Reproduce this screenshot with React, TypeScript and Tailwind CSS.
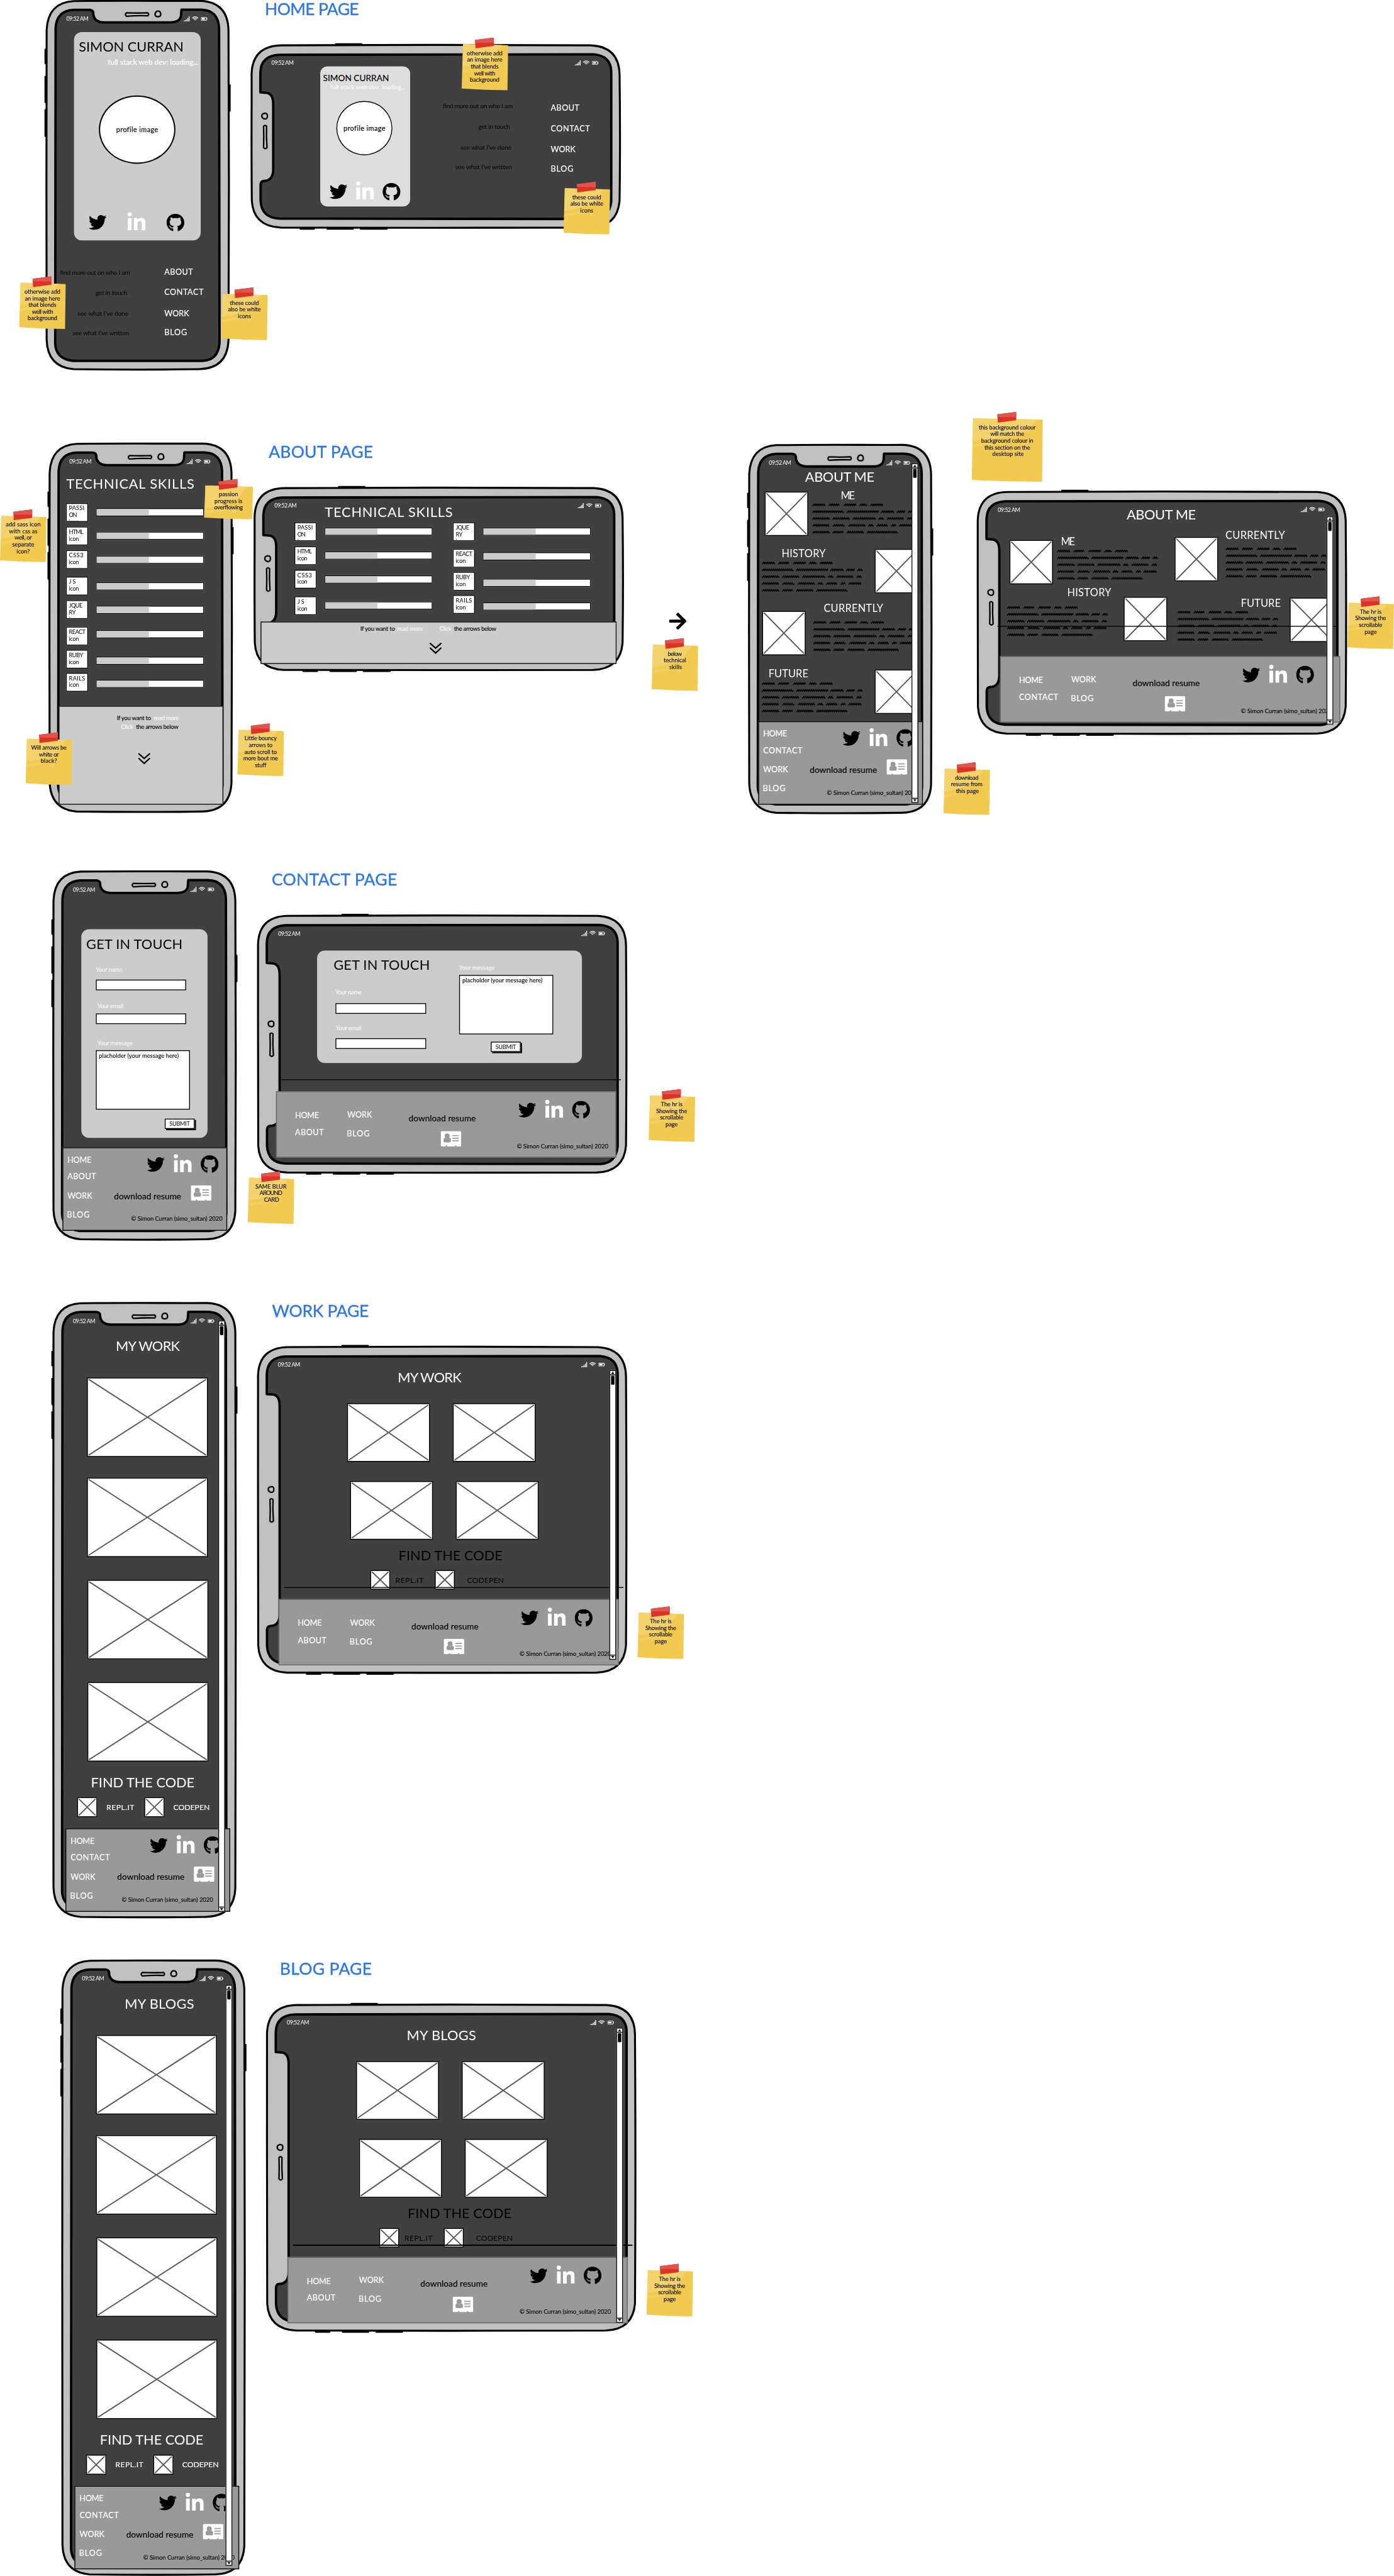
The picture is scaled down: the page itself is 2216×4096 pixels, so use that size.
import { useLayoutEffect, useRef, type ReactNode } from "react";
import { FaArrowRight, FaGithub, FaLinkedinIn, FaTwitter } from "react-icons/fa";

/* One line of lettering, tracked so that it spans exactly `w` canvas units. */
function T({ w, className = "", children }: { w: number; className?: string; children: string }) {
  const ref = useRef<HTMLSpanElement>(null);
  useLayoutEffect(() => {
    const el = ref.current;
    if (!el) return;
    el.style.letterSpacing = "0px";
    const natural = parseFloat(getComputedStyle(el).width);
    const spacing = (w - natural) / Math.max(1, children.length - 1);
    el.style.letterSpacing = `${spacing}px`;
    el.style.marginRight = `${-spacing}px`;
  }, [w, children]);
  return (
    <span ref={ref} className={`inline-block w-fit shrink-0 whitespace-pre ${className}`}>
      {children}
    </span>
  );
}

function Title({ w, className, children }: { w: number; className: string; children: string }) {
  return (
    <h2 className={`absolute flex text-[39px] leading-[40px] text-[#2b78e4] [-webkit-text-stroke:0.5px_#2b78e4] ${className}`}>
      <T w={w}>{children}</T>
    </h2>
  );
}

/* Sketched phone outline; `w` and `h` are the upright dimensions. */
function Phone({ w, h }: { w: number; h: number }) {
  const c = w / 2;
  return (
    <g stroke="#000" strokeLinejoin="round">
      <rect x={-2} y={114} width={6} height={36} rx={2} stroke="none" />
      <rect x={-2} y={177} width={6} height={64} rx={2} stroke="none" />
      <rect x={-2} y={255} width={6} height={65} rx={2} stroke="none" />
      <rect x={w - 5} y={197} width={7} height={64} rx={2} stroke="none" />
      <path
        d={`M66 2.5 C${c} 1 ${c + 60} 2.5 ${w - 70} 2 Q${w - 4} 4 ${w - 3} 72 L${w - 2} ${h / 2} L${w - 3} ${h - 70} Q${w - 6} ${h - 4} ${w - 72} ${h - 3} Q${c} ${h - 1} 66 ${h - 3} Q5 ${h - 8} 3 ${h - 72} L2.5 ${h / 2} L3 70 Q6 6 66 2.5Z`}
        fill="#c0c0c0"
        strokeWidth={4.6}
      />
      <path
        d={`M66 23 H104 Q113 24 112 33 Q114 52 138 52.500 H${w - 139} Q${w - 115} 52 ${w - 114} 36 L${w - 113} 22.500 H${w - 66} Q${w - 27} 24 ${w - 25} 66 L${w - 24} ${h - 64} Q${w - 27} ${h - 24} ${w - 64} ${h - 22.5} H64 Q25 ${h - 27} 23 ${h - 62} L24 66 Q26 25 66 23Z`}
        fill="#404040"
        strokeWidth={5.6}
      />
      <path
        d={`M${c - 26} 30 Q${c} 31 ${c + 24} 30 Q${c + 28} 33 ${c + 24} 37 Q${c} 36 ${c - 26} 38 Q${c - 31} 34 ${c - 26} 30Z`}
        fill="#c0c0c0"
        strokeWidth={3.4}
      />
      <path d={`M${c + 47} 26 q6 -1 7 6 q1 7 -6 7 q-8 0 -7 -7 q2 -6 6 -6Z`} fill="#c0c0c0" strokeWidth={3.4} />
    </g>
  );
}

function StatusBar() {
  return (
    <div className="mt-[34px] mr-[52px] ml-[49px] flex h-[20px] shrink-0 items-center justify-between text-white">
      <T w={52} className="text-[13px] leading-[20px]">09:52 AM</T>
      <svg className="h-[14px] w-[56px]" viewBox="0 0 56 14" fill="#fff">
        <path d="M0 11h2v2h-2zM3 10h2v3h-2zM6 8h2v5h-2zM9 5h2v8h-2zM12 1h2v12h-2z" />
        <g fill="none" stroke="#fff" strokeWidth="1.7">
          <path d="M20 5.500Q27 -1 34 5.500" />
          <path d="M22.500 7.500Q27 3.500 31.500 7.500" />
          <path d="M25 9.500Q27 8 29 9.500" />
        </g>
        <path d="M41 3h13v2h1.500v4h-1.500v2h-13zM42.200 4.200v5.600h10.600v-5.600z" fillRule="evenodd" />
        <path d="M43 5h7v4h-7z" />
      </svg>
    </div>
  );
}

function Device({
  w,
  h,
  landscape = false,
  className,
  children,
}: {
  w: number;
  h: number;
  landscape?: boolean;
  className: string;
  children: ReactNode;
}) {
  return (
    <div className={`absolute ${className}`}>
      <svg className="absolute inset-0 h-full w-full overflow-visible" viewBox={`0 0 ${w} ${h}`}>
        {landscape ? (
          <g transform={`translate(0 ${h}) rotate(-90)`}>
            <Phone w={h} h={w} />
          </g>
        ) : (
          <Phone w={w} h={h} />
        )}
      </svg>
      <div className="relative flex h-full flex-col items-stretch">
        <StatusBar />
        {children}
      </div>
    </div>
  );
}

type NoteLine = [text: string, width: number];

function Note({ w = 108.5, h = 123, lines, className }: { w?: number; h?: number; lines: NoteLine[]; className: string }) {
  const t = w / 2 - 23;
  return (
    <div className={`absolute ${className}`}>
      <svg className="absolute inset-0 h-full w-full overflow-visible" viewBox={`0 0 ${w} ${h}`}>
        <path d={`M3 15 L${w} 18 L${w - 1.5} ${h} L${w / 2} ${h - 1} L0 ${h - 4}Z`} fill="#f2ca4f" />
        <path d={`M3 15 L${w - 14} 17.500 Q${w - 28} 34 ${w - 32} 44 Q${w / 2} 62 2 68Z`} fill="#f4d36c" />
        <path d={`M2 76 Q${w / 2} 66 ${w - 34} 68 L${w - 44} 82 L${w - 50} 72 Q${w / 3} 74 1 82Z`} fill="#f4d36c" opacity={0.7} />
        <path d={`M${t} 5.500 L${t + 44} 0 L${t + 44} 19.500 L${t + 1} 25Z`} fill="#de3128" />
        <path d={`M${t} 5.500 L${t + 44} 0 L${t + 44} 12 L${t} 12Z`} fill="#e0554b" />
      </svg>
      <p className="relative flex flex-col items-center pt-[28.500px] text-[13.500px] leading-[15.700px] [-webkit-text-stroke:0.15px_#000]">
        {lines.map(([text, width]) => (
          <T key={text} w={width}>{text}</T>
        ))}
      </p>
    </div>
  );
}

function Picture({ w, h, className = "" }: { w: number; h: number; className?: string }) {
  return (
    <svg className={`shrink-0 ${className}`} width={w} height={h} viewBox={`0 0 ${w} ${h}`}>
      <rect x={1.2} y={1.2} width={w - 2.4} height={h - 2.4} fill="#fff" stroke="#000" strokeWidth={2.2} />
      <path d={`M5 5 L${w - 5} ${h - 5} M${w - 5} 5 L5 ${h - 5}`} stroke="#595959" strokeWidth={2.8} strokeLinecap="round" />
    </svg>
  );
}

const SCRIBBLE_WORDS = [
  [[0, 32], [38, 65], [73, 104], [110, 130], [135, 167]],
  [[0, 76], [80, 156], [160, 193], [197, 218], [223, 237]],
  [[0, 43], [47, 89], [94, 150], [154, 169], [174, 215], [221, 235]],
  [[0, 41], [48, 78], [84, 126], [130, 145], [150, 178], [184, 197], [202, 234]],
  [[0, 43], [47, 74], [80, 122], [127, 202]],
];

function scribble(from: number, to: number, y: number) {
  let d = `M${from + 1.5} ${y + 2}`;
  let up = true;
  for (let x = from + 5; x < to - 2; x += up ? 3 : 1.6) {
    d += ` L${x} ${up ? y - 2 : y + 2}`;
    up = !up;
  }
  return `${d} L${to - 2} ${y + 1}`;
}

function Scribble({ className = "" }: { className?: string }) {
  return (
    <svg className={`h-[76px] w-[238px] shrink-0 ${className}`} viewBox="0 0 238 76">
      {SCRIBBLE_WORDS.map((words, row) => (
        <path
          key={row}
          d={words.map(([a, b]) => scribble(a, b, 6 + row * 16)).join(" ")}
          fill="none"
          stroke="#000"
          strokeWidth={2.3}
          strokeLinecap="round"
          strokeLinejoin="round"
        />
      ))}
    </svg>
  );
}

function ScrollBar({ className }: { className: string }) {
  return (
    <div className={`absolute flex w-[16px] flex-col items-center justify-between border-2 border-black bg-white ${className}`}>
      <div className="flex w-full flex-col items-center">
        <svg className="h-[10px] w-full border-b-2 border-black" viewBox="0 0 12 8">
          <path d="M6 1.500L10 7H2Z" />
        </svg>
        <div className="mt-[1px] h-[21px] w-[8px] rounded-[2px] bg-black" />
      </div>
      <svg className="h-[10px] w-full border-t-2 border-black" viewBox="0 0 12 8">
        <path d="M6 6.500L10 1H2Z" />
      </svg>
    </div>
  );
}

function Socials({ className = "" }: { className?: string }) {
  return (
    <div className={`flex h-[48px] shrink-0 items-center text-black ${className}`}>
      <FaTwitter className="h-[42px] w-[42px] shrink-0" />
      <FaLinkedinIn className="h-[48px] w-[42px] shrink-0 text-white" />
      <FaGithub className="h-[43px] w-[42px] shrink-0" />
    </div>
  );
}

function CardIcon({ className = "" }: { className?: string }) {
  return (
    <svg className={`h-[36px] w-[48px] shrink-0 ${className}`} viewBox="0 0 48 36">
      <path d="M3 0H45Q48 0 48 3V33Q48 36 45 36H36.500V33.500H33.500V36H15V33.500H12V36H3Q0 36 0 33V3Q0 0 3 0Z" fill="#fff" />
      <g fill="#999">
        <circle cx="15" cy="11.500" r="5.800" />
        <path d="M6.500 22Q6.500 16 10.500 15.500Q15 19.500 19.500 15.500Q24 16 24 22Q24 26.500 20.500 26.500H10Q6.500 26.500 6.500 22Z" />
        <path d="M27 9.500H42V12H27zM27 15.500H42V18H27zM27 21.500H42V24H27z" />
      </g>
    </svg>
  );
}

const LINK_WIDTH: Record<string, number> = { HOME: 56, ABOUT: 67, CONTACT: 91.5, WORK: 58, BLOG: 53 };

function Link({ className = "", children }: { className?: string; children: string }) {
  return (
    <a className={`flex text-[18.500px] leading-[20px] text-white [-webkit-text-stroke:0.25px_#fff] ${className}`}>
      <T w={LINK_WIDTH[children]}>{children}</T>
    </a>
  );
}

function Copyright({ className = "" }: { className?: string }) {
  return (
    <T w={213.5} className={`text-[14px] leading-[16px] text-black [-webkit-text-stroke:0.15px_#000] ${className}`}>
      © Simon Curran (simo_sultan) 2020
    </T>
  );
}

function Download({ className = "" }: { className?: string }) {
  return (
    <T w={157} className={`text-[20px] leading-[20px] text-black [-webkit-text-stroke:0.25px_#000] ${className}`}>
      download resume
    </T>
  );
}

function FooterUpright({ second, className, copy = "ml-[40px]" }: { second: string; className: string; copy?: string }) {
  return (
    <footer className={`flex h-[195px] w-[385px] shrink-0 border-2 border-black bg-[#999999] ${className}`}>
      <nav className="ml-[10px] flex w-[109px] shrink-0 flex-col pt-[17px]">
        <Link className="h-[39px]">HOME</Link>
        <Link className="h-[45px]">{second}</Link>
        <Link className="h-[44px]">WORK</Link>
        <Link className="-ml-[1px]">BLOG</Link>
      </nav>
      <div className="flex flex-col">
        <Socials className="mt-[13.500px] ml-[76px] gap-[21px]" />
        <div className="mt-[25.500px] flex h-[36px] items-start">
          <Download className="mt-[14px]" />
          <CardIcon className="ml-[22px]" />
        </div>
        <Copyright className={`mt-[34px] ${copy}`} />
      </div>
    </footer>
  );
}

function FooterWide({ second, className, copy = "" }: { second: string; className: string; copy?: string }) {
  return (
    <footer className={`flex h-[155px] w-[795px] shrink-0 border-2 border-[#666666] bg-[#999999] ${className}`}>
      <nav className="ml-[43px] flex w-[265.500px] shrink-0 items-start">
        <div className="flex w-[122px] flex-col pt-[44px]">
          <Link className="h-[39.500px]">HOME</Link>
          <Link>{second}</Link>
        </div>
        <div className="flex flex-col pt-[42.500px]">
          <Link className="h-[44px]">WORK</Link>
          <Link className="-ml-[1px]">BLOG</Link>
        </div>
      </nav>
      <div className="flex w-[253px] shrink-0 flex-col pt-[50.500px]">
        <Download />
        <CardIcon className="mt-[20.500px] ml-[75px]" />
      </div>
      <div className="flex flex-col pt-[18px]">
        <Socials className="ml-[2.500px] gap-[21px]" />
        <Copyright className={`mt-[52px] ${copy}`} />
      </div>
    </footer>
  );
}

function Rule({ className }: { className: string }) {
  return <div className={`absolute h-[2.500px] bg-black ${className}`} />;
}

/* ---------- Home ---------- */

function HomeRow({ text, w, link, row, label, lift = "" }: { text: string; w: number; link: string; row: string; label: string; lift?: string }) {
  return (
    <div className={`flex ${row}`}>
      <div className={`flex shrink-0 ${label}`}>
        <T w={w} className={`text-[15px] leading-[20px] text-black ${lift}`}>{text}</T>
      </div>
      <Link>{link}</Link>
    </div>
  );
}

function HomeUpright() {
  return (
    <Device w={431} h={866} className="top-0 left-[106px] h-[866px] w-[431px]">
      <div className="mt-[21px] ml-[67px] flex h-[487px] w-[296px] shrink-0 flex-col rounded-[18px] bg-[#cccccc]">
        <T w={245} className="mt-[17px] ml-[11px] text-[32px] leading-[32px] text-black">SIMON CURRAN</T>
        <T w={213} className="mt-[12px] ml-[79px] text-[17px] leading-[20px] text-white [-webkit-text-stroke:0.3px_#fff]">full stack web dev: loading...</T>
        <div className="mt-[67px] ml-[58px] flex h-[160px] w-[179px] shrink-0 items-center justify-center rounded-[50%] border-[3.500px] border-black bg-white">
          <T w={97.5} className="text-[16px] leading-[20px] text-black [-webkit-text-stroke:0.25px_#000]">profile image</T>
        </div>
        <Socials className="mt-[113px] ml-[34px] gap-[49px]" />
      </div>
      <nav className="mt-[64px] flex flex-col">
        <HomeRow text="find more out on who I am" w={163} link="ABOUT" row="h-[47px]" label="w-[278px] pl-[34.500px]" />
        <HomeRow text="get in touch" w={74} link="CONTACT" row="h-[49px]" label="w-[278px] pl-[117.500px]" />
        <HomeRow text="see what I've done" w={119} link="WORK" row="h-[45px]" label="w-[278px] pl-[75px]" />
        <HomeRow text="see what I've written" w={132} link="BLOG" row="h-[20px]" label="w-[278px] pl-[63px]" />
      </nav>
    </Device>
  );
}

function HomeWide() {
  return (
    <Device landscape w={865} h={432} className="top-[103px] left-[585.500px] h-[432px] w-[865px]">
      <div className="-mt-[3px] flex">
        <div className="ml-[161.500px] flex h-[330px] w-[213px] shrink-0 flex-col rounded-[18px] border-[1.500px] border-black bg-[#dddddd]">
          <T w={154} className="mt-[17px] ml-[7px] text-[20px] leading-[20px] text-black [-webkit-text-stroke:0.2px_#000]">SIMON CURRAN</T>
          <T w={176} className="mt-[4px] ml-[24px] text-[14px] leading-[16px] text-white">full stack web dev: loading...</T>
          <div className="mt-[24px] ml-[38px] flex h-[127px] w-[131px] shrink-0 items-center justify-center rounded-[50%] border-[2.500px] border-black bg-white">
            <T w={97.5} className="text-[16px] leading-[20px] text-black [-webkit-text-stroke:0.25px_#000]">profile image</T>
          </div>
          <Socials className="mt-[61px] ml-[21.500px] gap-[20px]" />
        </div>
        <nav className="mt-[88px] ml-[75px] flex flex-col">
          <HomeRow text="find more out on who I am" w={163} link="ABOUT" row="h-[48px]" label="w-[252px] pl-0" lift="-mt-[5px]" />
          <HomeRow text="get in touch" w={74} link="CONTACT" row="h-[49px]" label="w-[252px] pl-[83px]" lift="-mt-[5px]" />
          <HomeRow text="see what I've done" w={119} link="WORK" row="h-[45px]" label="w-[252px] pl-[41px]" lift="-mt-[5px]" />
          <HomeRow text="see what I've written" w={132} link="BLOG" row="h-[20px]" label="w-[252px] pl-[29px]" lift="-mt-[5px]" />
        </nav>
      </div>
    </Device>
  );
}

/* ---------- About: technical skills ---------- */

const SKILL_WIDTH: Record<string, number> = {
  PASSI: 36, ON: 19, HTML: 34, CSS3: 34, JS: 16, JQUE: 32, RY: 16, REACT: 39, RUBY: 33.5, RAILS: 38, icon: 23.5,
};

function Skill({ lines, row = "", bar }: { lines: string[]; row?: string; bar: string }) {
  return (
    <div className={`flex h-[44px] shrink-0 items-start ${row}`}>
      <div className="flex h-[44px] w-[52px] shrink-0 flex-col overflow-hidden border-2 border-black bg-white pt-[2px] pl-[5px] text-[13.500px] leading-[16px] text-black">
        {lines.map((line) => (
          <T key={line} w={SKILL_WIDTH[line]}>{line}</T>
        ))}
      </div>
      <div className={`ml-[17.500px] flex h-[19px] w-[253px] shrink-0 border-[2.500px] border-black bg-white ${bar}`}>
        <div className="h-full w-[49%] bg-[#cccccc]" />
      </div>
    </div>
  );
}

function Chevrons({ className }: { className: string }) {
  return (
    <svg className={`h-[27px] w-[28px] shrink-0 ${className}`} viewBox="0 0 28 27" fill="none" stroke="#000" strokeWidth="3.400">
      <path d="M1.500 2L14 13L26.500 2M1.500 13L14 24.500L26.500 13" strokeLinecap="round" />
    </svg>
  );
}

const HINT = "text-[14px] leading-[20px]";
const HINT_BLACK = "text-[14px] leading-[20px] text-black [-webkit-text-stroke:0.15px_#000]";

function SkillsUpright() {
  return (
    <Device w={431} h={865} className="top-[1035px] left-[113px] h-[865px] w-[431px]">
      <T w={299} className="mt-[24.500px] ml-[42px] text-[32px] leading-[32px] text-white">TECHNICAL SKILLS</T>
      <div className="mt-[30px] ml-[41px] flex shrink-0 flex-col">
        <Skill lines={["PASSI", "ON", "icon"]} bar="mt-[12px]" />
        <Skill lines={["HTML", "icon"]} row="mt-[11px]" bar="mt-[12px]" />
        <Skill lines={["CSS3", "icon"]} row="mt-[11px]" bar="mt-[13px]" />
        <Skill lines={["JS", "icon"]} row="mt-[18px]" bar="mt-[13px]" />
        <Skill lines={["JQUE", "RY", "icon"]} row="mt-[11.500px]" bar="mt-[13px]" />
        <Skill lines={["REACT", "icon"]} row="mt-[18px]" bar="mt-[8px]" />
        <Skill lines={["RUBY", "icon"]} row="mt-[9.500px]" bar="mt-[16px]" />
        <Skill lines={["RAILS", "icon"]} row="mt-[10px]" bar="mt-[16.500px]" />
      </div>
      <div className="mt-[33px] ml-[24px] flex h-[231px] w-[385px] shrink-0 flex-col border-2 border-black bg-[#cccccc]">
        <div className="mt-[17px] ml-[134px] flex h-[20.500px] gap-[6px]">
          <T w={80} className={HINT_BLACK}>If you want to</T>
          <T w={59} className={`${HINT} text-white`}>read more</T>
        </div>
        <div className="ml-[144px] flex gap-[7px]">
          <T w={28} className={`${HINT} text-white`}>Click</T>
          <T w={99} className={HINT_BLACK}>the arrows below</T>
        </div>
        <Chevrons className="mt-[51px] ml-[184px]" />
      </div>
    </Device>
  );
}

function SkillsWide() {
  return (
    <Device landscape w={865} h={431} className="top-[1137.500px] left-[592.500px] h-[431px] w-[865px]">
      <T w={299} className="-mt-[11px] ml-[166.500px] text-[32px] leading-[32px] text-white">TECHNICAL SKILLS</T>
      <div className="mt-[8.500px] ml-[95.500px] flex h-[232px] shrink-0">
        <div className="flex w-[370px] flex-col">
          <Skill lines={["PASSI", "ON", "icon"]} bar="mt-[12px]" />
          <Skill lines={["HTML", "icon"]} row="mt-[11.500px]" bar="mt-[12px]" />
          <Skill lines={["CSS3", "icon"]} row="mt-[11px]" bar="mt-[13px]" />
          <Skill lines={["JS", "icon"]} row="mt-[18px]" bar="mt-[12.500px]" />
        </div>
        <div className="flex flex-col">
          <Skill lines={["JQUE", "RY", "icon"]} bar="mt-[12px]" />
          <Skill lines={["REACT", "icon"]} row="mt-[18px]" bar="mt-[8px]" />
          <Skill lines={["RUBY", "icon"]} row="mt-[10px]" bar="mt-[16px]" />
          <Skill lines={["RAILS", "icon"]} row="mt-[10px]" bar="mt-[17px]" />
        </div>
      </div>
      <div className="ml-[16.500px] flex h-[99px] w-[832px] shrink-0 flex-col border-2 border-black bg-[#cccccc]">
        <div className="mt-[5px] ml-[231px] flex">
          <T w={81} className={HINT_BLACK}>If you want to</T>
          <T w={60} className={`ml-[5px] ${HINT} text-white`}>read more</T>
          <div className="w-[39px]" />
          <T w={28} className={`${HINT} text-white`}>Click</T>
          <div className="w-[6px]" />
          <T w={99} className={HINT_BLACK}>the arrows below</T>
        </div>
        <Chevrons className="mt-[22px] ml-[393px]" />
      </div>
    </Device>
  );
}

/* ---------- About: about me ---------- */

const H3 = "text-[24px] leading-[24px] text-white";

function AboutUpright() {
  return (
    <Device w={431} h={865} className="top-[1038px] left-[1748px] h-[865px] w-[431px]">
      <T w={162} className="mt-[6px] ml-[133.500px] text-[32px] leading-[32px] text-white">ABOUT ME</T>
      <div className="mt-[19px] ml-[38.500px] flex h-[104px] shrink-0 items-start">
        <Picture w={102} h={104} />
        <div className="-mt-[3px] ml-[9.500px] flex flex-col">
          <T w={33} className={`ml-[67px] ${H3}`}>ME</T>
          <Scribble className="mt-[4px]" />
        </div>
      </div>
      <div className="mt-[30px] ml-[32px] flex h-[104px] shrink-0 items-start">
        <div className="-mt-[2px] flex w-[263.500px] shrink-0 flex-col">
          <T w={103} className={`ml-[46.500px] ${H3}`}>HISTORY</T>
          <Scribble className="mt-[5px]" />
        </div>
        <Picture w={102} h={104} />
      </div>
      <div className="mt-[41px] ml-[32.500px] flex h-[104px] shrink-0 items-start">
        <Picture w={102} h={104} />
        <div className="-mt-[18px] ml-[17px] flex flex-col">
          <T w={139} className={`ml-[25.500px] ${H3}`}>CURRENTLY</T>
          <Scribble className="mt-[15px]" />
        </div>
      </div>
      <div className="mt-[33px] ml-[32px] flex h-[104px] shrink-0 items-start">
        <div className="-mt-[2px] flex w-[263.500px] shrink-0 flex-col">
          <T w={93} className={`ml-[16px] ${H3}`}>FUTURE</T>
          <Scribble className="mt-[5px]" />
        </div>
        <Picture w={102} h={104} />
      </div>
      <FooterUpright second="CONTACT" className="mt-[17px] ml-[23.500px]" />
      <ScrollBar className="top-[44.500px] left-[382px] h-[794px]" />
    </Device>
  );
}

function AboutWide() {
  return (
    <Device landscape w={865} h={571} className="top-[1146.500px] left-[2283px] h-[571px] w-[865px]">
      <T w={162} className="-mt-[14px] ml-[350px] text-[32px] leading-[32px] text-white">ABOUT ME</T>
      <div className="ml-[70px] flex h-[315px] shrink-0">
        <div className="flex w-[392px] shrink-0 flex-col">
          <div className="mt-[43px] ml-[6px] flex h-[104px] items-start">
            <Picture w={102} h={104} />
            <div className="-mt-[8.500px] ml-[8.500px] flex flex-col">
              <T w={33} className={`ml-[10px] ${H3}`}>ME</T>
              <Scribble className="mt-[5px]" />
            </div>
          </div>
          <div className="mt-[29.500px] flex h-[104px] items-start">
            <div className="-mt-[23px] flex w-[272.500px] shrink-0 flex-col">
              <T w={103} className={`ml-[141px] ${H3}`}>HISTORY</T>
              <Scribble className="mt-[18px]" />
            </div>
            <Picture w={102} h={104} />
          </div>
        </div>
        <div className="flex flex-col">
          <div className="mt-[36px] flex h-[104px] items-start">
            <Picture w={102} h={104} />
            <div className="-mt-[16px] ml-[17px] flex flex-col">
              <T w={139} className={H3}>CURRENTLY</T>
              <Scribble className="mt-[14px]" />
            </div>
          </div>
          <div className="mt-[38px] ml-[6px] flex h-[104px] items-start">
            <div className="mt-[1.500px] flex w-[263px] shrink-0 flex-col">
              <T w={93} className={`ml-[149px] ${H3}`}>FUTURE</T>
              <Scribble className="mt-[2.500px]" />
            </div>
            <Picture w={102} h={104} />
          </div>
        </div>
      </div>
      <FooterWide second="CONTACT" className="ml-[53.500px]" />
      <Rule className="top-[316px] left-[48px] w-[793px]" />
      <ScrollBar className="top-[60px] left-[816.500px] h-[487px]" />
    </Device>
  );
}

/* ---------- Contact ---------- */

const FIELD_LABEL = "text-[14px] leading-[16px] text-white";

function MessageBox({ className }: { className: string }) {
  return (
    <div className={`flex h-[139px] w-[220px] shrink-0 border-[2.500px] border-black bg-white ${className}`}>
      <T w={187} className="mt-[3px] ml-[5.500px] text-[13.500px] leading-[16px] text-black [-webkit-text-stroke:0.15px_#000]">
        placholder (your message here)
      </T>
    </div>
  );
}

function Submit({ className }: { className: string }) {
  return (
    <button className={`flex h-[24px] w-[70px] shrink-0 items-center justify-center border-2 border-black bg-white shadow-[3px_3px_0_#000] ${className}`}>
      <T w={48} className="text-[13.500px] leading-[16px] text-black">SUBMIT</T>
    </button>
  );
}

function Field({ className }: { className: string }) {
  return <div className={`h-[25px] w-[211.500px] shrink-0 border-[2.500px] border-black bg-white ${className}`} />;
}

function ContactUpright() {
  return (
    <Device w={431} h={865} className="top-[2035px] left-[121.500px] h-[865px] w-[431px]">
      <div className="mt-[83px] ml-[68px] flex h-[488px] w-[295.500px] shrink-0 flex-col rounded-[18px] bg-[#cccccc]">
        <T w={225} className="mt-[18px] ml-[12px] text-[32px] leading-[32px] text-black">GET IN TOUCH</T>
        <T w={62} className={`mt-[37px] ml-[34.500px] ${FIELD_LABEL}`}>Your name</T>
        <Field className="mt-[14.500px] ml-[34px]" />
        <T w={60} className={`mt-[28px] ml-[38.500px] ${FIELD_LABEL}`}>Your email</T>
        <Field className="mt-[10.500px] ml-[34px]" />
        <T w={83} className={`mt-[37px] ml-[38px] ${FIELD_LABEL}`}>Your message</T>
        <MessageBox className="mt-[8px] ml-[34px]" />
        <Submit className="mt-[21px] ml-[195.500px]" />
      </div>
      <FooterUpright second="ABOUT" className="mt-[22px] ml-[24px]" />
    </Device>
  );
}

function ContactWide() {
  return (
    <Device landscape w={865} h={606} className="top-[2137.500px] left-[601px] h-[606px] w-[865px]">
      <div className="mt-[30px] ml-[140px] flex h-[263px] w-[619px] shrink-0 rounded-[18px] bg-[#cccccc]">
        <div className="flex w-[332px] shrink-0 flex-col">
          <T w={225} className="mt-[17px] ml-[38.500px] text-[32px] leading-[32px] text-black">GET IN TOUCH</T>
          <T w={62} className={`mt-[40px] ml-[42.500px] ${FIELD_LABEL}`}>Your name</T>
          <Field className="mt-[18px] ml-[43px]" />
          <T w={60} className={`mt-[25.500px] ml-[44px] ${FIELD_LABEL}`}>Your email</T>
          <Field className="mt-[16px] ml-[43px]" />
        </div>
        <div className="flex flex-col">
          <T w={83} className={`mt-[32px] ${FIELD_LABEL}`}>Your message</T>
          <MessageBox className="mt-[9px]" />
          <Submit className="mt-[17px] ml-[74px]" />
        </div>
      </div>
      <FooterWide second="ABOUT" className="mt-[66px] ml-[43.500px]" />
      <Rule className="top-[385px] left-[56.500px] w-[793px]" />
    </Device>
  );
}

/* ---------- Work and blog galleries ---------- */

function GalleryUpright({ title, w, className, scroll, copy }: { title: string; w: number; className: string; scroll: string; copy: string }) {
  return (
    <Device w={431} h={1440} className={`h-[1440px] w-[431px] ${className}`}>
      <T w={w} className="mt-[32px] ml-[149px] text-[32px] leading-[32px] text-white">{title}</T>
      <Picture w={283} h={186} className="mt-[58.500px] ml-[81px]" />
      <Picture w={283} h={186} className="mt-[48px] ml-[81px]" />
      <Picture w={283} h={186} className="mt-[53px] ml-[82.500px]" />
      <Picture w={283} h={186} className="mt-[52.500px] ml-[82.500px]" />
      <T w={242} className="mt-[32px] ml-[91px] text-[32px] leading-[32px] text-white">FIND THE CODE</T>
      <div className="mt-[19px] ml-[58px] flex h-[47px] shrink-0 items-center text-[18px] leading-[20px] text-white [-webkit-text-stroke:0.2px_#fff]">
        <Picture w={47.5} h={47} />
        <div className="ml-[21.500px] flex w-[88px]"><T w={65.5}>REPL.IT</T></div>
        <Picture w={47.5} h={47} />
        <div className="ml-[21px] flex"><T w={85}>CODEPEN</T></div>
      </div>
      <FooterUpright second="CONTACT" className="mt-[26.500px] ml-[31.500px]" copy={copy} />
      <ScrollBar className={scroll} />
    </Device>
  );
}

function GalleryWide({ title, w, className, scroll, copy }: { title: string; w: number; className: string; scroll: string; copy: string }) {
  return (
    <Device landscape w={865} h={767} className={`h-[767px] w-[865px] ${className}`}>
      <T w={w} className="mt-[3.500px] ml-[329px] text-[32px] leading-[32px] text-white">{title}</T>
      <div className="mt-[44.500px] ml-[210px] flex shrink-0 gap-[53px]">
        <Picture w={194} h={137.5} />
        <Picture w={194} h={137.5} />
      </div>
      <div className="mt-[44.500px] ml-[217px] flex shrink-0 gap-[53px]">
        <Picture w={194} h={137.5} />
        <Picture w={194} h={137.5} />
      </div>
      <T w={243} className="mt-[19.500px] ml-[331px] text-[32px] leading-[32px] text-black">FIND THE CODE</T>
      <div className="mt-[19px] ml-[264px] flex h-[46px] shrink-0 items-center text-[18px] leading-[20px] text-black">
        <Picture w={47} h={46} />
        <div className="ml-[12.500px] flex w-[91.500px]"><T w={66}>REPL.IT</T></div>
        <Picture w={47} h={46} />
        <div className="ml-[29px] flex"><T w={86}>CODEPEN</T></div>
      </div>
      <FooterWide second="ABOUT" className="mt-[22px] ml-[50.500px]" copy={copy} />
      <Rule className="top-[563.500px] left-[63px] w-[793px]" />
      <ScrollBar className={scroll} />
    </Device>
  );
}

const HR_NOTE: NoteLine[] = [["The hr is", 50.5], ["Showing the", 72], ["scrollable", 54.5], ["page", 28.5]];
const IMAGE_NOTE: NoteLine[] = [["otherwise add", 83.5], ["an image here", 82.5], ["that blends", 64.5], ["well with", 49.5], ["background", 69]];
const ICON_NOTE: NoteLine[] = [["these could", 67.5], ["also be white", 76.5], ["icons", 30.5]];
const SIZE = "h-[123px] w-[108.500px]";

export default function App() {
  return (
    <div className="h-[4096px] w-[2216px] overflow-hidden bg-white font-['Lato','Open_Sans',sans-serif] text-black">
      <main className="relative h-[6021px] w-[3258px] origin-top-left scale-[0.6802]">
        <Title w={220} className="top-[0.500px] left-[619px]">HOME PAGE</Title>
        <HomeUpright />
        <HomeWide />
        <Note lines={IMAGE_NOTE} className={`top-[646px] left-[45px] ${SIZE}`} />
        <Note lines={ICON_NOTE} className={`top-[672px] left-[517px] ${SIZE}`} />
        <Note lines={IMAGE_NOTE} className={`top-[88px] left-[1078.500px] ${SIZE}`} />
        <Note lines={ICON_NOTE} className={`top-[425px] left-[1317px] ${SIZE}`} />

        <Title w={244} className="top-[1034.500px] left-[628px]">ABOUT PAGE</Title>
        <SkillsUpright />
        <SkillsWide />
        <AboutUpright />
        <AboutWide />
        <Note w={114} h={94} lines={[["passion", 44.5], ["progress is", 65], ["overflowing", 67]]} className="top-[1119.500px] left-[477px] h-[94px] w-[114px]" />
        <Note lines={[["add sass icon", 81.5], ["with css as", 66.5], ["well, or", 40], ["separate", 51.5], ["icon?", 31]]} className={`top-[1190.500px] left-0 ${SIZE}`} />
        <Note lines={[["Will arrows be", 83], ["white or", 46], ["black?", 38]]} className={`top-[1711.500px] left-[60px] ${SIZE}`} />
        <Note
          lines={[["Little bouncy", 75], ["arrows to", 55.5], ["auto scroll to", 76], ["more bout me", 81], ["stuff", 26.5]]}
          className={`top-[1690.500px] left-[555px] ${SIZE}`}
        />
        <FaArrowRight className="absolute top-[1429px] left-[1562px] h-[46px] w-[44px] text-black" />
        <Note lines={[["below", 33], ["technical", 52.5], [" skills", 33]]} className={`top-[1492px] left-[1523px] ${SIZE}`} />
        <Note
          w={166}
          h={163}
          lines={[["this background colour", 133], ["will match the", 79], ["background colour in", 122], ["this section on the", 107], [" desktop site", 77]]}
          className="top-[963px] left-[2271px] h-[163px] w-[166px]"
        />
        <Note lines={[["download", 54.5], ["resume from", 73.5], [" this page", 57]]} className={`top-[1782px] left-[2205px] ${SIZE}`} />
        <Note lines={HR_NOTE} className={`top-[1394px] left-[3149px] ${SIZE}`} />

        <Title w={293} className="top-[2034.500px] left-[635px]">CONTACT PAGE</Title>
        <ContactUpright />
        <ContactWide />
        <Note lines={[["SAME BLUR", 73], ["AROUND", 53], [" CARD", 38]]} className={`top-[2738px] left-[579px] ${SIZE}`} />
        <Note lines={HR_NOTE} className={`top-[2545.500px] left-[1515.500px] ${SIZE}`} />

        <Title w={226} className="top-[3043.500px] left-[636px]">WORK PAGE</Title>
        <GalleryUpright title="MY WORK" w={150} className="top-[3043.500px] left-[121.500px]" scroll="top-[43.500px] left-[388.500px] h-[1382px]" copy="ml-[10.500px]" />
        <GalleryWide title="MY WORK" w={149} className="top-[3146px] left-[600.500px]" scroll="top-[57px] left-[823px] h-[677px]" copy="" />
        <Note lines={HR_NOTE} className={`top-[3754.500px] left-[1490px] ${SIZE}`} />

        <Title w={215} className="top-[4580.500px] left-[654px]">BLOG PAGE</Title>
        <GalleryUpright title="MY BLOGS" w={162} className="top-[4580.500px] left-[142.500px]" scroll="top-[59px] left-[384.500px] h-[1358px]" copy="ml-[40px]" />
        <GalleryWide title="MY BLOGS" w={162} className="top-[4683.500px] left-[621.500px]" scroll="top-[56.500px] left-[818px] h-[690px]" copy="-ml-[21px]" />
        <Note lines={HR_NOTE} className={`top-[5291.500px] left-[1511px] ${SIZE}`} />
      </main>
    </div>
  );
}
